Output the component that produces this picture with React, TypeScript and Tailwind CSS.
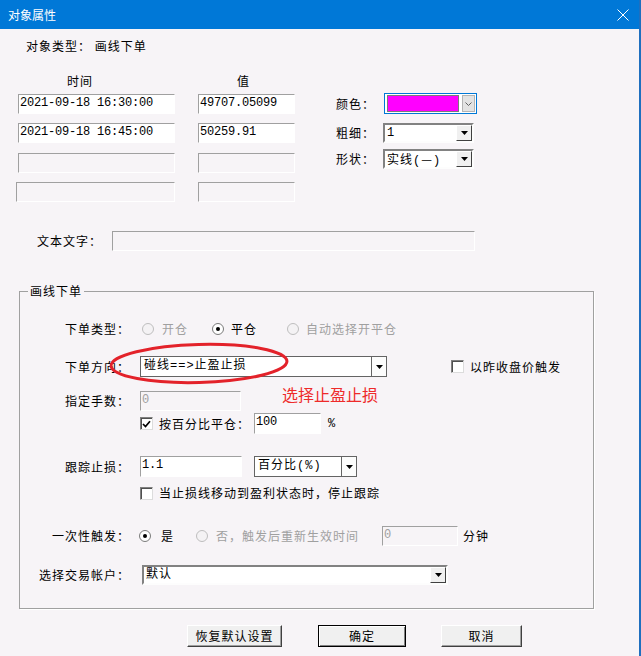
import clsx from "clsx";

const MONO = "font-['Liberation_Mono','Noto_Sans_CJK_SC',monospace]";
const CJK = "font-['Noto_Sans_CJK_SC',sans-serif]";

const Triangle = () => (
  <svg width="7" height="4" viewBox="0 0 7 4">
    <path d="M0 0h7L3.5 4z" fill="#000" />
  </svg>
);

const Edit = ({
  value = "",
  disabled = false,
  className = "",
}: {
  value?: string;
  disabled?: boolean;
  className?: string;
}) => (
  <div
    className={clsx(
      "h-[20px] overflow-hidden border border-t-[#a0a0a0] border-l-[#a0a0a0] border-r-white border-b-white pl-[1px] text-[12px] leading-[16px] tracking-[-0.2px]",
      MONO,
      disabled ? "text-[#a0a0a0]" : "bg-white text-black",
      className
    )}
  >
    {value}
  </div>
);

const ComboFlat = ({ children, className = "" }: { children: React.ReactNode; className?: string }) => (
  <div className={clsx("flex h-[21px] border border-[#646464] bg-white", className)}>
    <div className={clsx("flex-1 pl-[3px] leading-[19px]", MONO)}>{children}</div>
    <div className="flex w-[15px] items-center justify-center border-l border-[#646464] bg-[#fcfcfc]">
      <Triangle />
    </div>
  </div>
);

const Combo3d = ({ children, className = "" }: { children: React.ReactNode; className?: string }) => (
  <div
    className={clsx(
      "flex h-[20px] border-2 border-t-[#828282] border-l-[#828282] border-b-[#fdfdfd] border-r-[#fdfdfd] bg-white",
      className
    )}
  >
    <div className={clsx("flex-1 pl-[2px] leading-[16px]", MONO)}>{children}</div>
    <div className="flex w-[16px] items-center justify-center border border-t-white border-l-white border-b-[#404040] border-r-[#404040] bg-[#f0f0f0]">
      <Triangle />
    </div>
  </div>
);

const Radio = ({ checked = false, disabled = false }: { checked?: boolean; disabled?: boolean }) => (
  <svg width="12" height="12" viewBox="0 0 12 12" className="shrink-0">
    <circle
      cx="6"
      cy="6"
      r="5.5"
      fill={disabled ? "#f4f2f4" : "#fff"}
      stroke={disabled ? "#bdbdbd" : "#7a7a7a"}
    />
    {checked && <circle cx="6" cy="6" r="2" fill="#000" />}
  </svg>
);

const Check = ({ checked = false }: { checked?: boolean }) => (
  <div className="flex h-[13px] w-[13px] shrink-0 items-center justify-center border border-t-[#808080] border-l-[#808080] border-b-[#dcdcdc] border-r-[#dcdcdc] bg-white shadow-[inset_1px_1px_0_#505050]">
    {checked && (
      <svg width="9" height="8" viewBox="0 0 9 8">
        <path d="M1 4l2.5 2.5L8 1.2" fill="none" stroke="#000" strokeWidth="1.7" />
      </svg>
    )}
  </div>
);

const Label = ({ children }: { children?: React.ReactNode }) => (
  <div className="w-[110px] shrink-0 text-right">{children}</div>
);

const App = () => {
  return (
    <div
      className={clsx(
        "relative flex h-[656px] w-[641px] overflow-hidden bg-[#1f6fbf] text-[12px] leading-[16px] tracking-[1px] text-black",
        CJK
      )}
    >
      <div className="flex w-[639px] flex-col bg-[#f7f4f7]">
        {/* title bar */}
        <div className="flex h-[29px] items-center justify-between bg-[#0078d7] pl-[8px] pr-[10px] text-white tracking-normal">
          <span>对象属性</span>
          <svg width="12" height="12" viewBox="0 0 12 12">
            <path d="M0.5 0.5l11 11M11.5 0.5l-11 11" stroke="#fff" strokeWidth="1" />
          </svg>
        </div>

        <div className="ml-[26px] mt-[9px]">对象类型： 画线下单</div>

        {/* points + style */}
        <div className="mt-[19px] flex pl-[18px]">
          <div className="flex w-[157px] flex-col">
            <div className="h-[16px] pl-[49px]">时间</div>
            <Edit className="mt-[5px]" value="2021-09-18 16:30:00" />
            <Edit className="mt-[9px]" value="2021-09-18 16:45:00" />
            <Edit className="mt-[10px]" disabled />
            <Edit className="-ml-[2px] mt-[9px]" disabled />
          </div>
          <div className="ml-[23px] flex w-[97px] flex-col">
            <div className="h-[16px] pl-[39px]">值</div>
            <Edit className="mt-[5px]" value="49707.05099" />
            <Edit className="mt-[9px]" value="50259.91" />
            <Edit className="mt-[10px]" disabled />
            <Edit className="mt-[9px]" disabled />
          </div>
          <div className="ml-[41px] mt-[20px] flex flex-col">
            <div className="flex items-center">
              <div className="w-[48px]">颜色：</div>
              <div className="flex h-[21px] w-[93px] border border-[#0078d7] bg-white pb-[1px] pl-[2px] pr-[1px] pt-[1px]">
                <div className="w-[72px] border border-[#7a7a7a] bg-[#ff00ff]" />
                <div className="ml-auto flex w-[13px] items-center justify-center border border-[#b4b4b4] bg-[#e3e3e3]">
                  <svg width="7" height="4" viewBox="0 0 7 4">
                    <path d="M0.5 0.5L3.5 3.5L6.5 0.5" fill="none" stroke="#606060" strokeWidth="1" />
                  </svg>
                </div>
              </div>
            </div>
            <div className="mt-[9px] flex items-center">
              <div className="w-[47px]">粗细：</div>
              <Combo3d className="w-[91px]">1</Combo3d>
            </div>
            <div className="mt-[6px] flex items-center">
              <div className="w-[47px]">形状：</div>
              <Combo3d className="w-[91px]">
                实线(<span className={CJK}>—</span>)
              </Combo3d>
            </div>
          </div>
        </div>

        <div className="mt-[29px] flex items-center pl-[37px]">
          <div className="w-[75px]">文本文字：</div>
          <Edit className="w-[363px]" disabled />
        </div>

        {/* group box */}
        <fieldset className="ml-[19px] mt-[32px] w-[575px] border border-[#a0a0a0] pb-[23px] shadow-[1px_1px_0_#ffffff]">
          <legend className="ml-[8px] px-[2px] leading-[16px]">画线下单</legend>

          <div className="mt-[20px] flex h-[20px] items-center">
            <Label>下单类型：</Label>
            <div className="ml-[12px] flex w-[70px] items-center gap-[8px] text-[#a0a0a0]">
              <Radio disabled />
              <span>开仓</span>
            </div>
            <div className="flex w-[75px] items-center gap-[7px]">
              <Radio checked />
              <span>平仓</span>
            </div>
            <div className="flex items-center gap-[7px] text-[#a0a0a0]">
              <Radio disabled />
              <span>自动选择开平仓</span>
            </div>
          </div>

          <div className="mt-[17px] flex h-[21px] items-center">
            <Label>下单方向：</Label>
            <ComboFlat className="ml-[10px] w-[247px]">碰线==&gt;止盈止损</ComboFlat>
            <div className="ml-[64px]">
              <Check />
            </div>
            <span className="ml-[6px]">以昨收盘价触发</span>
          </div>

          <div className="mt-[14px] flex h-[20px] items-center">
            <Label>指定手数：</Label>
            <Edit className="ml-[10px] w-[101px]" value="0" disabled />
          </div>

          <div className="mt-[2px] flex h-[21px] items-center">
            <Label />
            <div className="ml-[10px]">
              <Check checked />
            </div>
            <span className="ml-[6px] w-[95px]">按百分比平仓：</span>
            <Edit className="h-[21px] w-[67px]" value="100" />
            <span className={clsx("ml-[7px] tracking-normal", MONO)}>%</span>
          </div>

          <div className="mt-[22px] flex h-[21px] items-center">
            <Label>跟踪止损：</Label>
            <Edit className="ml-[10px] h-[21px] w-[102px]" value="1.1" />
            <ComboFlat className="ml-[12px] w-[103px]">百分比(%)</ComboFlat>
          </div>

          <div className="mt-[6px] flex h-[20px] items-center">
            <Label />
            <div className="ml-[10px]">
              <Check />
            </div>
            <span className="ml-[6px]">当止损线移动到盈利状态时，停止跟踪</span>
          </div>

          <div className="mt-[23px] flex h-[20px] items-center">
            <Label>一次性触发：</Label>
            <div className="ml-[9px] flex w-[57px] items-center gap-[10px]">
              <Radio checked />
              <span>是</span>
            </div>
            <div className="flex w-[186px] items-center gap-[8px] text-[#a0a0a0]">
              <Radio disabled />
              <span>否，触发后重新生效时间</span>
            </div>
            <Edit className="w-[76px]" value="0" disabled />
            <span className="ml-[5px]">分钟</span>
          </div>

          <div className="mt-[19px] flex h-[20px] items-center">
            <Label>选择交易帐户：</Label>
            <Combo3d className="ml-[12px] w-[306px]">默认</Combo3d>
          </div>
        </fieldset>

        {/* buttons */}
        <div className="mt-[16px] flex pl-[187px]">
          <div className="flex h-[22px] w-[95px] items-center justify-center border border-t-white border-l-white border-b-[#404040] border-r-[#404040] bg-[#f0f0f0] shadow-[inset_-1px_-1px_0_#a0a0a0]">
            恢复默认设置
          </div>
          <div className="ml-[36px] flex h-[22px] w-[88px] items-center justify-center border border-black bg-[#f0f0f0] shadow-[inset_1px_1px_0_#ffffff,inset_-1px_-1px_0_#808080]">
            确定
          </div>
          <div className="ml-[35px] flex h-[22px] w-[81px] items-center justify-center border border-t-white border-l-white border-b-[#404040] border-r-[#404040] bg-[#f0f0f0] shadow-[inset_-1px_-1px_0_#a0a0a0]">
            取消
          </div>
        </div>
      </div>

      {/* red annotation */}
      <svg
        width="190"
        height="50"
        viewBox="0 0 190 50"
        className="pointer-events-none absolute left-[105px] top-[339px]"
      >
        <ellipse
          cx="94"
          cy="24.5"
          rx="88"
          ry="19"
          fill="none"
          stroke="#e3222a"
          strokeWidth="3"
          transform="rotate(-1.5 94 24.5)"
        />
      </svg>
      <div className="absolute left-[282px] top-[383px] text-[16px] leading-[22px] tracking-normal text-[#ee2a2a]">
        选择止盈止损
      </div>
    </div>
  );
};

export default App;
